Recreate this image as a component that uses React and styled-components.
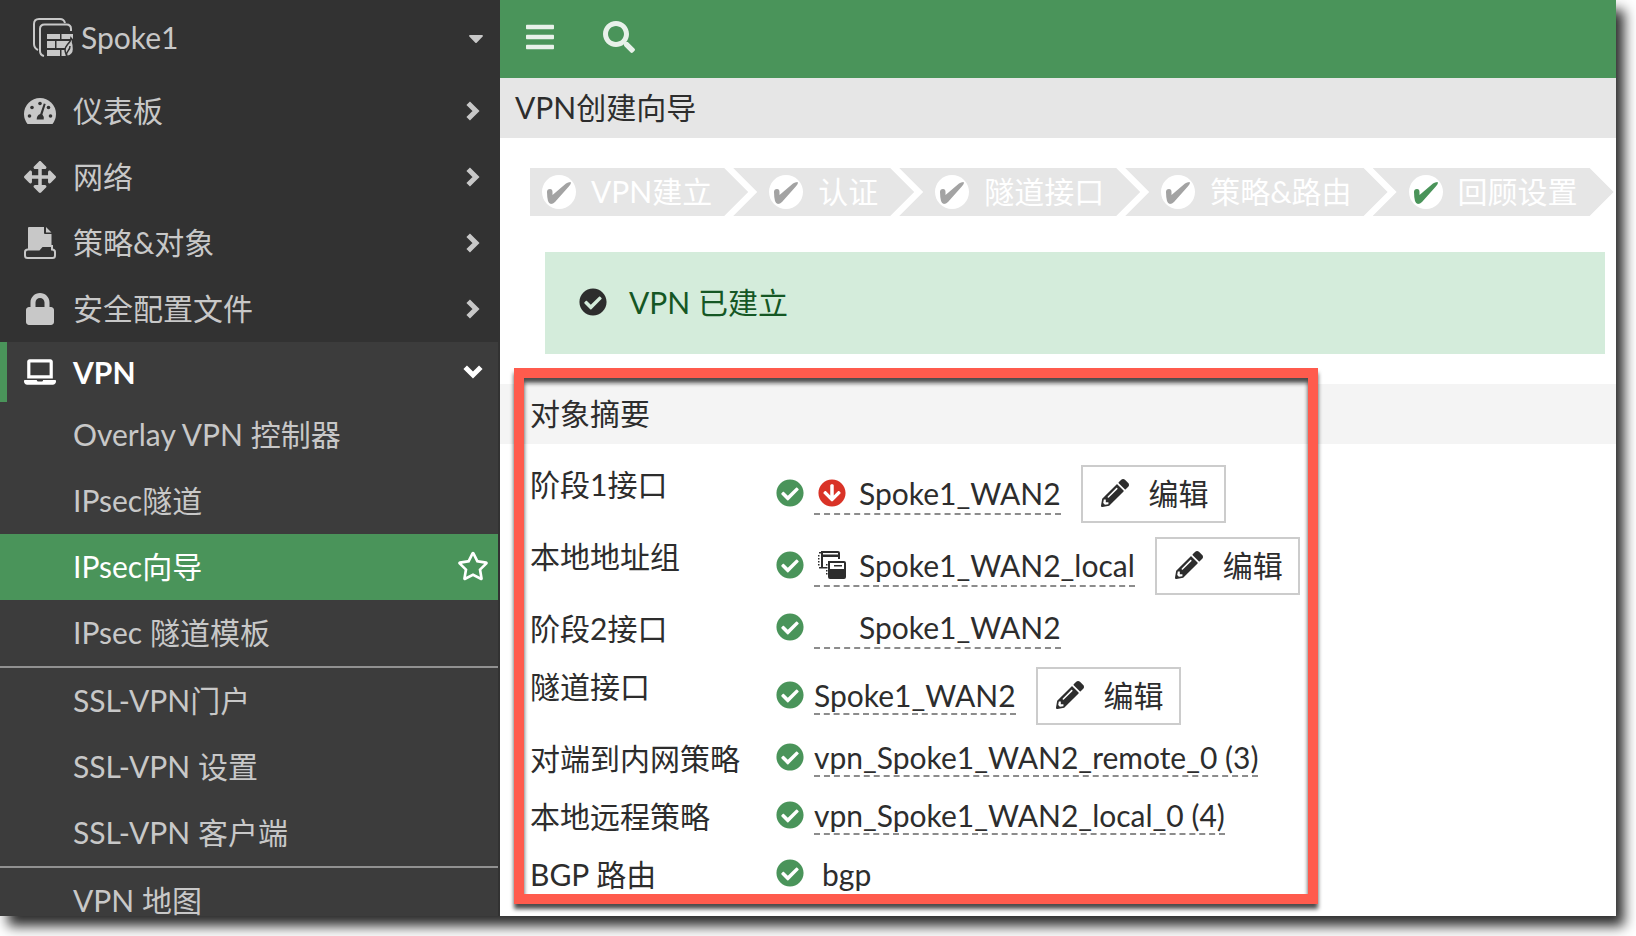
import React from "react";
import styled, { createGlobalStyle, css } from "styled-components";
import {
  FaArrowCircleDown,
  FaArrowsAlt,
  FaBars,
  FaCaretDown,
  FaCheckCircle,
  FaLaptop,
  FaLock,
  FaPencilAlt,
  FaRegStar,
  FaSearch,
} from "react-icons/fa";

const colors = {
  green: "#4a945a",
  dark: "#323232",
  menu: "#3c3c3c",
  muted: "#c8c8c8",
  text: "#2d2d2d",
};

const GlobalStyle = createGlobalStyle`
  * {
    box-sizing: border-box;
  }
  body {
    margin: 0;
    background: #fff;
    color: ${colors.text};
    font-family: Lato, "Noto Sans CJK SC", sans-serif;
    font-size: 30px;
    line-height: 36px;
  }
  button {
    font: inherit;
    color: inherit;
    cursor: pointer;
  }
  a {
    color: inherit;
    text-decoration: none;
  }
  svg {
    display: block;
    flex: none;
  }
`;

const Page = styled.div`
  height: 100vh;
  padding: 0 20px 20px 0;
  overflow: hidden;
`;

const Shell = styled.div`
  display: flex;
  height: 100%;
  overflow: hidden;
  background: #fff;
  box-shadow: 8px 10px 12px rgba(0, 0, 0, 0.83);
`;

/* sidebar */

const Sidebar = styled.nav`
  flex: none;
  width: 500px;
  border-right: 2px solid ${colors.dark};
  background: ${colors.dark};
  color: ${colors.muted};
  white-space: nowrap;
`;

const DeviceButton = styled.button`
  display: flex;
  align-items: center;
  width: 100%;
  height: 78px;
  padding: 0 10px 3px 33px;
  border: 0;
  background: none;
  text-align: left;
`;

const DeviceName = styled.span`
  flex: 1;
  padding: 0 0 2px 8px;
`;

const NavLabel = styled.span`
  flex: 1;
  padding-bottom: 2px;
`;

const NavItem = styled.a`
  display: flex;
  align-items: center;
  gap: 17px;
  height: 66px;
  padding: 0 18px 0 24px;

  ${(props) =>
    props.$active &&
    css`
      height: 60px;
      padding: 0 15px 0 17px;
      border-left: 7px solid ${colors.green};
      background: ${colors.menu};
      color: #fff;
      font-weight: 700;

      ${NavLabel} {
        padding-bottom: 0;
      }
    `}
`;

const IconSlot = styled.span`
  display: flex;
  justify-content: center;
  width: 32px;
`;

const SubMenu = styled.ul`
  margin: 0;
  padding: 0;
  list-style: none;
  background: ${colors.menu};
`;

const SubMenuItem = styled.li`
  border-top: ${(props) => (props.$divided ? "2px solid #919191" : "0")};
`;

const SubMenuLink = styled.a`
  display: flex;
  align-items: center;
  justify-content: space-between;
  height: 66px;
  padding: 0 9px 2px 73px;
  background: ${(props) => (props.$selected ? colors.green : "transparent")};
  color: ${(props) => (props.$selected ? "#fff" : "inherit")};
`;

/* main area */

const Main = styled.main`
  flex: 1;
  min-width: 0;
  white-space: nowrap;
`;

const TopBar = styled.header`
  display: flex;
  align-items: center;
  gap: 47px;
  height: 78px;
  padding: 0 24px 4px;
  background: ${colors.green};
  color: #e8f1ea;
`;

const IconButton = styled.button`
  padding: 0;
  border: 0;
  background: none;
`;

const PageTitle = styled.h1`
  margin: 0;
  padding: 11px 15px 13px;
  background: #e6e6e6;
  font-size: 30px;
  font-weight: 400;
  line-height: 36px;
`;

const Steps = styled.ol`
  display: flex;
  margin: 30px 0 36px 30px;
  padding: 0;
  list-style: none;
`;

const Step = styled.li`
  display: flex;
  align-items: center;
  gap: 15px;
  flex: none;
  height: 48px;
  padding: 0 36px;
  background: #e6e6e6;
  color: #fff;
  clip-path: polygon(
    0 0,
    calc(100% - 24px) 0,
    100% 50%,
    calc(100% - 24px) 100%,
    0 100%,
    24px 50%
  );

  & + & {
    margin-left: -15px;
  }

  &:first-child {
    padding-left: 12px;
    clip-path: polygon(
      0 0,
      calc(100% - 24px) 0,
      100% 50%,
      calc(100% - 24px) 100%,
      0 100%
    );
  }
`;

const StepMark = styled.span`
  width: 34px;
  height: 34px;
  border-radius: 50%;
  background: #fff;
  color: ${(props) => (props.$current ? colors.green : "#a3a3a3")};
`;

const StepName = styled.span`
  padding-bottom: 2px;
`;

const Alert = styled.div`
  display: flex;
  align-items: center;
  gap: 22px;
  height: 102px;
  margin: 0 11px 30px 45px;
  padding: 0 34px 3px;
  background: #d4ecdb;
`;

const AlertText = styled.span`
  color: #155724;
`;

const Summary = styled.section`
  position: relative;
`;

const SummaryTitle = styled.h2`
  margin: 0 0 14px;
  padding: 11px 30px 13px;
  background: #f4f4f4;
  font-size: 30px;
  font-weight: 400;
  line-height: 36px;
`;

const SummaryList = styled.dl`
  margin: 0;
  padding-left: 30px;
`;

const SummaryRow = styled.div`
  display: grid;
  grid-template-columns: 246px 1fr;
`;

const Term = styled.dt`
  padding-top: 8px;
`;

const Value = styled.dd`
  display: flex;
  align-items: center;
  min-height: ${(props) => (props.$editable ? 72 : 58)}px;
  margin: 0;
  padding-bottom: ${(props) => (props.$editable ? 0 : 6)}px;
`;

const StatusIcon = styled(FaCheckCircle)`
  margin-bottom: 2px;
  color: ${colors.green};
`;

const ObjectLink = styled.a`
  display: flex;
  align-items: center;
  margin-left: 10px;
  border-bottom: 2px dashed #8c8c8c;

  ${(props) =>
    props.$withIcon &&
    css`
      margin-top: 2px;
      padding: 0 0 2px 4px;
      gap: 13px;
    `}
`;

const ObjectIcon = styled.span`
  width: 28px;
  height: 28px;
`;

const ObjectText = styled.span`
  margin-left: 18px;
`;

const EditButton = styled.button`
  display: flex;
  align-items: center;
  gap: 20px;
  height: 58px;
  margin-left: 20px;
  padding: 0 15px 2px 18px;
  border: 2px solid #ccc;
  background: #fff;
`;

const Callout = styled.div`
  position: absolute;
  top: -16px;
  bottom: 2px;
  left: 14px;
  width: 804px;
  border: 10px solid #ff5b4d;
  filter: drop-shadow(0 5px 2px rgba(0, 0, 0, 0.7));
  pointer-events: none;
`;

/* icons */

function VdomIcon() {
  return (
    <svg width="40" height="40" viewBox="0 0 40 40" fill="none">
      <path
        d="M32 5Q31 1 27 1H6Q1 1 1 6v20q0 4 4 6"
        stroke="currentColor"
        strokeWidth="2"
      />
      <path
        d="M38 13v-2q0-4.500-4.500-4.500H11.500Q7 6.500 7 11v22q0 4 4 5"
        stroke="currentColor"
        strokeWidth="2"
      />
      <path
        d="M14 16h13v5H14zM28.500 16H40v5H28.500zM14 23h8v7h-8zM23.500 23H38v7H23.500zM14 32h13v6H14zM28.500 32H38v6h-9.500z"
        fill="currentColor"
      />
      <path
        d="M38 20q0 3-3.500 6.500-3.500 4-2 8l1.500 4q7-1 6.500-8 0-4-1-6.500.5-2-1.500-4z"
        fill="currentColor"
        stroke={colors.dark}
        strokeWidth="1.500"
      />
      <path d="M37 28q0 3-2 5t-1.500 5" stroke={colors.dark} strokeWidth="1.500" />
    </svg>
  );
}

function GaugeIcon() {
  return (
    <svg width="32" height="26" viewBox="0 0 32 26">
      <path
        d="M3.500 26Q0 21.500 0 16a16 16 0 0 1 32 0q0 5.500-3.500 10z"
        fill="currentColor"
      />
      <g fill={colors.dark}>
        <circle cx="5.500" cy="18" r="1.800" />
        <circle cx="8" cy="9.500" r="1.800" />
        <circle cx="16" cy="5.500" r="1.800" />
        <circle cx="24.500" cy="9.500" r="1.800" />
        <circle cx="26.500" cy="18" r="1.800" />
        <path d="M19.800 5.500l1.900.600-3.300 10.400q1.600 1.500 1.300 5h-7q0-4.500 3.500-5.500z" />
      </g>
    </svg>
  );
}

function PolicyIcon() {
  return (
    <svg width="32" height="32" viewBox="0 0 32 32">
      <path
        d="M5 0h15v6q0 1 1 1h6.500v13H17.500L15 22.500H5q-1 0-1-1V1q0-1 1-1zM22 0l5.500 5.500H22z"
        fill="currentColor"
      />
      <path
        d="M4 22.500Q1 22.500 1 25v3.500Q1 31 3.500 31h25q2.500 0 2.500-2.500V25q0-2.500-3-2.500V19H18l-3 3.500z"
        fill="none"
        stroke="currentColor"
        strokeWidth="2"
      />
    </svg>
  );
}

function AddressGroupIcon() {
  return (
    <svg width="28" height="28" viewBox="0 0 28 28" fill="currentColor">
      <path d="M3 0h17q2 0 2 2v6h-2V6H5v10h3v1.500H3zM5 2v1.500h15V2z" fillRule="evenodd" />
      <path d="M0 4h1.500v1.500H0zM0 7h1.500v1.500H0zM0 10h1.500v1.500H0zM0 13h1.500v1.500H0zM1 1h2v1.500H1zM1 16h2v1.500H1z" />
      <path
        fillRule="evenodd"
        d="M10 10h16q2 0 2 2v14q0 2-2 2H12q-2 0-2-2zM12 12v6h14v-6z"
      />
      <path d="M16 14h8v1.500h-8z" />
      <path d="M8 13h1.500v1.500H8zM8 16h1.500v1.500H8zM8 19h1.500v1.500H8zM8 22h1.500v1.500H8z" />
    </svg>
  );
}

function ChevronRight() {
  return (
    <svg width="14" height="20" viewBox="0 0 14 20" fill="none">
      <path d="M2.200 2.200 10 10l-7.800 7.800" stroke="currentColor" strokeWidth="5" />
    </svg>
  );
}

function ChevronDown() {
  return (
    <svg width="20" height="14" viewBox="0 0 20 14" fill="none">
      <path d="M2.200 2.200 10 10l7.800-7.800" stroke="currentColor" strokeWidth="5" />
    </svg>
  );
}

function CheckMark() {
  return (
    <svg width="34" height="34" viewBox="0 0 34 34">
      <path
        d="M5 17q0-3 3-3 2.500 0 2.500 3v3L24 8.500Q26 7 28.500 7q.5 0 .3 1.500-.2 1.200-2 3L13 27q-2 2-4 2t-3-3q-1-4-1-9z"
        fill="currentColor"
      />
    </svg>
  );
}

const navItems = [
  { label: "仪表板", icon: <GaugeIcon /> },
  { label: "网络", icon: <FaArrowsAlt size={32} /> },
  { label: "策略&对象", icon: <PolicyIcon /> },
  { label: "安全配置文件", icon: <FaLock size={32} /> },
];

const vpnItems = [
  { label: "Overlay VPN 控制器" },
  { label: "IPsec隧道" },
  { label: "IPsec向导", selected: true },
  { label: "IPsec 隧道模板" },
  { label: "SSL-VPN门户", divided: true },
  { label: "SSL-VPN 设置" },
  { label: "SSL-VPN 客户端" },
  { label: "VPN 地图", divided: true },
];

const steps = ["VPN建立", "认证", "隧道接口", "策略&路由", "回顾设置"];

const summary = [
  {
    term: "阶段1接口",
    name: "Spoke1_WAN2",
    icon: <FaArrowCircleDown size={28} color="#d93327" />,
    editable: true,
  },
  {
    term: "本地地址组",
    name: "Spoke1_WAN2_local",
    icon: <AddressGroupIcon />,
    editable: true,
  },
  { term: "阶段2接口", name: "Spoke1_WAN2", icon: <span /> },
  { term: "隧道接口", name: "Spoke1_WAN2", editable: true },
  { term: "对端到内网策略", name: "vpn_Spoke1_WAN2_remote_0 (3)" },
  { term: "本地远程策略", name: "vpn_Spoke1_WAN2_local_0 (4)" },
  { term: "BGP 路由", name: "bgp", plain: true },
];

function SummaryValue({ item }) {
  return (
    <Value $editable={item.editable}>
      <StatusIcon size={28} />
      {item.plain ? (
        <ObjectText>{item.name}</ObjectText>
      ) : (
        <ObjectLink href="#" $withIcon={Boolean(item.icon)}>
          {item.icon && <ObjectIcon>{item.icon}</ObjectIcon>}
          {item.name}
        </ObjectLink>
      )}
      {item.editable && (
        <EditButton type="button">
          <FaPencilAlt size={28} />
          编辑
        </EditButton>
      )}
    </Value>
  );
}

export default function App() {
  return (
    <>
      <GlobalStyle />
      <Page>
        <Shell>
          <Sidebar>
            <DeviceButton type="button">
              <VdomIcon />
              <DeviceName>Spoke1</DeviceName>
              <FaCaretDown size={24} />
            </DeviceButton>
            {navItems.map((item) => (
              <NavItem key={item.label} href="#">
                <IconSlot>{item.icon}</IconSlot>
                <NavLabel>{item.label}</NavLabel>
                <ChevronRight />
              </NavItem>
            ))}
            <NavItem href="#" $active>
              <IconSlot>
                <FaLaptop size={32} />
              </IconSlot>
              <NavLabel>VPN</NavLabel>
              <ChevronDown />
            </NavItem>
            <SubMenu>
              {vpnItems.map((item) => (
                <SubMenuItem key={item.label} $divided={item.divided}>
                  <SubMenuLink href="#" $selected={item.selected}>
                    {item.label}
                    {item.selected && <FaRegStar size={32} />}
                  </SubMenuLink>
                </SubMenuItem>
              ))}
            </SubMenu>
          </Sidebar>
          <Main>
            <TopBar>
              <IconButton type="button" aria-label="菜单">
                <FaBars size={32} />
              </IconButton>
              <IconButton type="button" aria-label="搜索">
                <FaSearch size={32} />
              </IconButton>
            </TopBar>
            <PageTitle>VPN创建向导</PageTitle>
            <Steps>
              {steps.map((step, index) => (
                <Step key={step}>
                  <StepMark $current={index === steps.length - 1}>
                    <CheckMark />
                  </StepMark>
                  <StepName>{step}</StepName>
                </Step>
              ))}
            </Steps>
            <Alert role="status">
              <FaCheckCircle size={28} />
              <AlertText>VPN 已建立</AlertText>
            </Alert>
            <Summary>
              <SummaryTitle>对象摘要</SummaryTitle>
              <SummaryList>
                {summary.map((item) => (
                  <SummaryRow key={item.term}>
                    <Term>{item.term}</Term>
                    <SummaryValue item={item} />
                  </SummaryRow>
                ))}
              </SummaryList>
              <Callout />
            </Summary>
          </Main>
        </Shell>
      </Page>
    </>
  );
}
